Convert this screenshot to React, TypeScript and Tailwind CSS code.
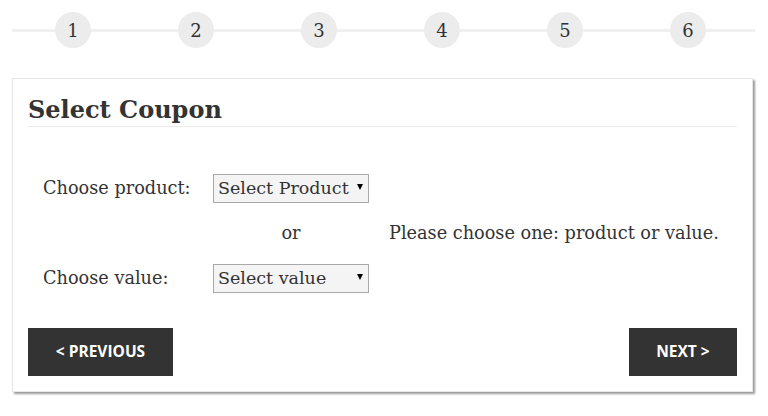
import React from 'react';

const steps = [1, 2, 3, 4, 5, 6];

const serif = { fontFamily: '"DejaVu Serif", "Liberation Serif", serif' };
const sans = { fontFamily: '"Open Sans", sans-serif' };

const FakeSelect: React.FC<{ label: string; options: string[] }> = ({ label, options }) => (
  <div className="relative w-[156px] h-[29px]">
    <select
      defaultValue={label}
      className="appearance-none w-full h-full border border-[#a9a9a9] bg-[#f4f4f4] pl-[4px] pr-[18px] text-[17.5px] text-[#333] leading-none outline-none"
      style={serif}
    >
      <option>{label}</option>
      {options.map((o) => (
        <option key={o}>{o}</option>
      ))}
    </select>
    <span className="pointer-events-none absolute right-[6px] top-[10px] w-0 h-0 border-l-[3.5px] border-r-[3.5px] border-t-[6px] border-l-transparent border-r-transparent border-t-black" />
  </div>
);

const App: React.FC = () => {
  return (
    <div className="w-[768px] h-[416px] bg-white overflow-hidden text-[#333]" style={serif}>
      {/* step indicator */}
      <div className="relative h-[60px] mx-[12px]">
        <div className="absolute left-0 right-[1px] top-[29px] h-[3px] bg-[#f0f0f0]" />
        <div className="relative flex pl-[43px] pt-[12px] gap-[87px]">
          {steps.map((s) => (
            <div
              key={s}
              className="w-[36px] h-[36px] rounded-full bg-[#ececec] flex items-center justify-center text-[18px] text-[#333]"
            >
              {s}
            </div>
          ))}
        </div>
      </div>

      {/* card */}
      <div className="mt-[18px] ml-[12px] w-[741px] h-[314px] border border-[#e6e6e6] shadow-[2px_2px_2px_rgba(0,0,0,0.4)] px-[15px] pt-[15px]">
        <h2 className="text-[24px] font-bold leading-[32px] border-b border-[#ececec] text-[#333]">
          Select Coupon
        </h2>

        <div className="mt-[47px] pl-[15px] text-[17.7px]">
          <div className="flex items-center h-[29px]">
            <div className="w-[170px]">Choose product:</div>
            <FakeSelect label="Select Product" options={['Product A', 'Product B']} />
          </div>
          <div className="flex items-center h-[29px] mt-[16px]">
            <div className="w-[170px]" />
            <div className="w-[156px] text-center">or</div>
            <div className="ml-[20px]">Please choose one: product or value.</div>
          </div>
          <div className="flex items-center h-[29px] mt-[16px]">
            <div className="w-[170px]">Choose value:</div>
            <FakeSelect label="Select value" options={['$10', '$25', '$50']} />
          </div>
        </div>

        <div className="flex justify-between mt-[35px]">
          <button className="h-[48px] w-[145px] bg-[#333] text-white text-[15.5px] font-bold" style={sans}>
            &lt; PREVIOUS
          </button>
          <button className="h-[48px] w-[108px] bg-[#333] text-white text-[15.5px] font-bold" style={sans}>
            NEXT &gt;
          </button>
        </div>
      </div>
    </div>
  );
};

export default App;
